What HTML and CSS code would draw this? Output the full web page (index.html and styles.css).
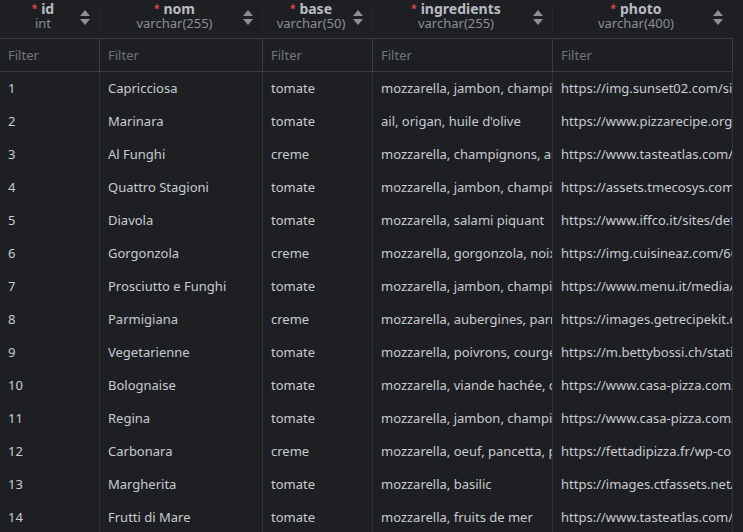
FILE: index.html
```html
<!DOCTYPE html>
<html>
<head>
<meta charset="utf-8">
<link rel="stylesheet" href="styles.css">
</head>
<body>
<div class="grid">
  <div class="hcell"><div class="htext"><div class="hname"><span class="req">*</span>id</div><div class="htype">int</div></div><svg class="sort" viewBox="0 0 10 16"><path d="M5 0 L10 6 L0 6 Z M0 9 L10 9 L5 15 Z"/></svg></div>
  <div class="hcell"><div class="htext"><div class="hname"><span class="req">*</span>nom</div><div class="htype">varchar(255)</div></div><svg class="sort" viewBox="0 0 10 16"><path d="M5 0 L10 6 L0 6 Z M0 9 L10 9 L5 15 Z"/></svg></div>
  <div class="hcell"><div class="htext"><div class="hname"><span class="req">*</span>base</div><div class="htype">varchar(50)</div></div><svg class="sort" viewBox="0 0 10 16"><path d="M5 0 L10 6 L0 6 Z M0 9 L10 9 L5 15 Z"/></svg></div>
  <div class="hcell"><div class="htext"><div class="hname"><span class="req">*</span>ingredients</div><div class="htype">varchar(255)</div></div><svg class="sort" viewBox="0 0 10 16"><path d="M5 0 L10 6 L0 6 Z M0 9 L10 9 L5 15 Z"/></svg></div>
  <div class="hcell last"><div class="htext"><div class="hname"><span class="req">*</span>photo</div><div class="htype">varchar(400)</div></div><svg class="sort" viewBox="0 0 10 16"><path d="M5 0 L10 6 L0 6 Z M0 9 L10 9 L5 15 Z"/></svg></div>

  <div class="fcell"><input class="filter" placeholder="Filter"></div>
  <div class="fcell"><input class="filter" placeholder="Filter"></div>
  <div class="fcell"><input class="filter" placeholder="Filter"></div>
  <div class="fcell"><input class="filter" placeholder="Filter"></div>
  <div class="fcell"><input class="filter" placeholder="Filter"></div>

  <div class="cell">1</div><div class="cell">Capricciosa</div><div class="cell">tomate</div><div class="cell">mozzarella, jambon, champignons, artichauts</div><div class="cell">https://img.sunset02.com/sites/default/files/capricciosa.jpg</div>
  <div class="cell">2</div><div class="cell">Marinara</div><div class="cell">tomate</div><div class="cell">ail, origan, huile d'olive</div><div class="cell">https://www.pizzarecipe.org/wp-content/uploads/marinara.jpg</div>
  <div class="cell">3</div><div class="cell">Al Funghi</div><div class="cell">creme</div><div class="cell">mozzarella, champignons, ail</div><div class="cell">https://www.tasteatlas.com/images/dishes/funghi.jpg</div>
  <div class="cell">4</div><div class="cell">Quattro Stagioni</div><div class="cell">tomate</div><div class="cell">mozzarella, jambon, champignons, artichauts, olives</div><div class="cell">https://assets.tmecosys.com/image/upload/quattro.jpg</div>
  <div class="cell">5</div><div class="cell">Diavola</div><div class="cell">tomate</div><div class="cell">mozzarella, salami piquant</div><div class="cell">https://www.iffco.it/sites/default/files/diavola.jpg</div>
  <div class="cell">6</div><div class="cell">Gorgonzola</div><div class="cell">creme</div><div class="cell">mozzarella, gorgonzola, noix</div><div class="cell">https://img.cuisineaz.com/660x660/gorgonzola.jpg</div>
  <div class="cell">7</div><div class="cell">Prosciutto e Funghi</div><div class="cell">tomate</div><div class="cell">mozzarella, jambon, champignons</div><div class="cell">https://www.menu.it/media/prosciutto-funghi.jpg</div>
  <div class="cell">8</div><div class="cell">Parmigiana</div><div class="cell">creme</div><div class="cell">mozzarella, aubergines, parmesan</div><div class="cell">https://images.getrecipekit.com/parmigiana.jpg</div>
  <div class="cell">9</div><div class="cell">Vegetarienne</div><div class="cell">tomate</div><div class="cell">mozzarella, poivrons, courgettes</div><div class="cell">https://m.bettybossi.ch/static/rezepte/vegetarienne.jpg</div>
  <div class="cell">10</div><div class="cell">Bolognaise</div><div class="cell">tomate</div><div class="cell">mozzarella, viande hachée, oignons</div><div class="cell">https://www.casa-pizza.com/images/bolognaise.jpg</div>
  <div class="cell">11</div><div class="cell">Regina</div><div class="cell">tomate</div><div class="cell">mozzarella, jambon, champignons</div><div class="cell">https://www.casa-pizza.com/images/regina.jpg</div>
  <div class="cell">12</div><div class="cell">Carbonara</div><div class="cell">creme</div><div class="cell">mozzarella, oeuf, pancetta, parmesan</div><div class="cell">https://fettadipizza.fr/wp-content/uploads/carbonara.jpg</div>
  <div class="cell">13</div><div class="cell">Margherita</div><div class="cell">tomate</div><div class="cell">mozzarella, basilic</div><div class="cell">https://images.ctfassets.net/margherita.jpg</div>
  <div class="cell">14</div><div class="cell">Frutti di Mare</div><div class="cell">tomate</div><div class="cell">mozzarella, fruits de mer</div><div class="cell">https://www.tasteatlas.com/images/dishes/frutti.jpg</div>
</div>
</body>
</html>
```
FILE: styles.css
```css
html, body {
  margin: 0;
  padding: 0;
  background: #1e1f23;
  overflow: hidden;
}
body {
  font-family: "Noto Sans", "Open Sans", sans-serif;
  font-size: 13px;
  color: #c8cbd0;
}
.grid {
  display: grid;
  grid-template-columns: 100px 163px 110px 180px 180px;
  grid-auto-rows: 33px;
  grid-template-rows: 39px 33px;
  width: 733px;
}
.hcell {
  display: flex;
  align-items: center;
  padding: 0 10px 0 6px;
  border-bottom: 1px solid #3a3c41;
  position: relative;
}
.hcell::after {
  content: "";
  position: absolute;
  right: 0;
  top: 5px;
  bottom: 6px;
  width: 1px;
  background: #26282c;
}
.hcell.last::after { display: none; }
.htext {
  flex: 1;
  display: flex;
  flex-direction: column;
  align-items: center;
  line-height: 15px;
  margin-top: -7px;
}
.hname {
  font-weight: bold;
  font-size: 14px;
  color: #b8bbc1;
}
.req {
  color: #e0474e;
  font-size: 10px;
  vertical-align: 2px;
  margin-right: 4px;
}
.htype {
  color: #8b8e94;
}
.sort {
  width: 10px;
  height: 16px;
  fill: #8d9096;
  flex: none;
  margin-top: -2px;
}
.fcell {
  border-right: 1px solid #3a3c41;
  border-bottom: 1px solid #3a3c41;
  display: flex;
  align-items: center;
}
.filter {
  width: 100%;
  box-sizing: border-box;
  background: transparent;
  border: none;
  outline: none;
  font: inherit;
  color: #c8cbd0;
  padding: 0 8px;
}
.filter::placeholder {
  color: #73767b;
}
.cell {
  border-right: 1px solid #303236;
  display: flex;
  align-items: center;
  padding: 0 8px 2px;
  white-space: nowrap;
  overflow: hidden;
  min-width: 0;
}
```
